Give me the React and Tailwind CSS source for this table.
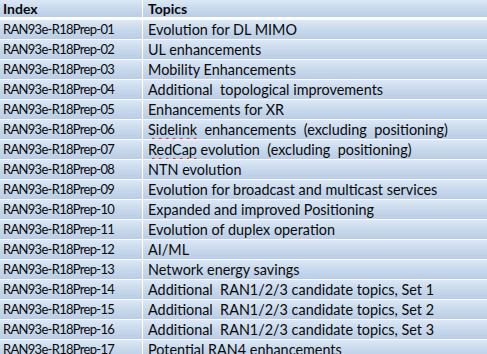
import React from "react";

const rows = [
  ["RAN93e-R18Prep-01", "Evolution for DL MIMO"],
  ["RAN93e-R18Prep-02", "UL enhancements"],
  ["RAN93e-R18Prep-03", "Mobility Enhancements"],
  ["RAN93e-R18Prep-04", "Additional  topological improvements"],
  ["RAN93e-R18Prep-05", "Enhancements for XR"],
  ["RAN93e-R18Prep-06", "__Sidelink__  enhancements  (excluding  positioning)"],
  ["RAN93e-R18Prep-07", "__RedCap__ evolution  (excluding  positioning)"],
  ["RAN93e-R18Prep-08", "NTN evolution"],
  ["RAN93e-R18Prep-09", "Evolution for broadcast and multicast services"],
  ["RAN93e-R18Prep-10", "Expanded and improved Positioning"],
  ["RAN93e-R18Prep-11", "Evolution of duplex operation"],
  ["RAN93e-R18Prep-12", "AI/ML"],
  ["RAN93e-R18Prep-13", "Network energy savings"],
  ["RAN93e-R18Prep-14", "Additional  RAN1/2/3 candidate topics, Set 1"],
  ["RAN93e-R18Prep-15", "Additional  RAN1/2/3 candidate topics, Set 2"],
  ["RAN93e-R18Prep-16", "Additional  RAN1/2/3 candidate topics, Set 3"],
  ["RAN93e-R18Prep-17", "Potential RAN4 enhancements"],
];

function Topic({ text }) {
  const parts = text.split("__");
  return (
    <span className="whitespace-pre">
      {parts.map((p, i) =>
        i % 2 === 1 ? (
          <span key={i} className="underline decoration-wavy decoration-[#e02020] decoration-1 underline-offset-2">
            {p}
          </span>
        ) : (
          <React.Fragment key={i}>{p}</React.Fragment>
        )
      )}
    </span>
  );
}

const cell =
  "bg-gradient-to-b from-[#dce8f4] via-[#c8d9ec] to-[#b9cde6] flex items-center overflow-hidden";

export default function App() {
  return (
    <div
      className="w-[487px] h-[354px] overflow-hidden bg-white text-[#0a0a0a]"
      style={{ fontFamily: "Lato, 'Open Sans', sans-serif" }}
    >
      <div className="grid grid-cols-[142px_1fr] gap-x-px gap-y-px bg-white auto-rows-[19px]">
        <div className={`${cell} h-[17px] pl-[3px] text-[14px] font-bold`}>Index</div>
        <div className={`${cell} h-[17px] pl-[5px] text-[14px] font-bold`}>Topics</div>
        {rows.map(([idx, topic]) => (
          <React.Fragment key={idx}>
            <div className={`${cell} pl-[3px] text-[13px] tracking-[-0.7px]`}>{idx}</div>
            <div className={`${cell} pl-[5px] text-[14.4px]`}>
              <Topic text={topic} />
            </div>
          </React.Fragment>
        ))}
      </div>
    </div>
  );
}
